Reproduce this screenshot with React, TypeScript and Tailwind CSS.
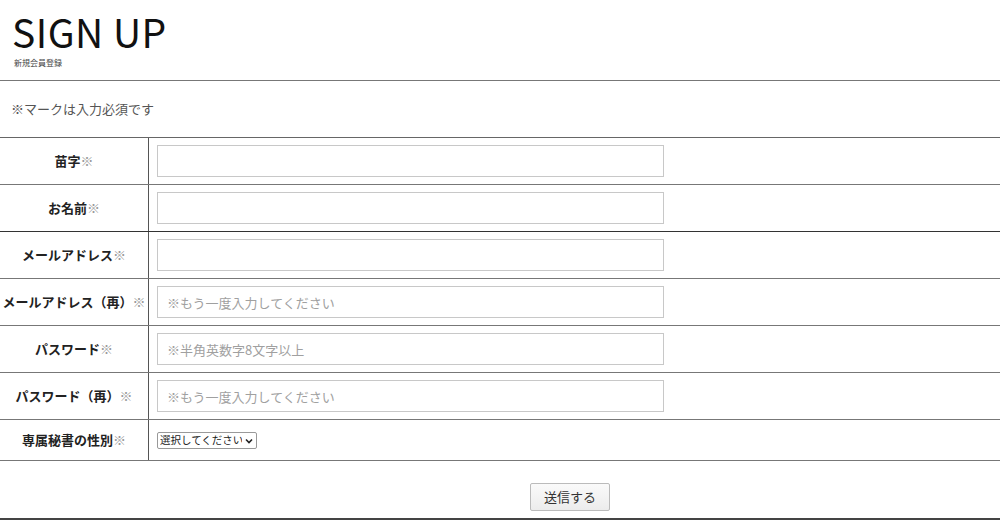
import React from 'react';

type Field = {
  label: string;
  type?: string;
  placeholder?: string;
  select?: boolean;
};

const fields: Field[] = [
  { label: '苗字' },
  { label: 'お名前' },
  { label: 'メールアドレス', type: 'email' },
  { label: 'メールアドレス（再）', type: 'email', placeholder: '※もう一度入力してください' },
  { label: 'パスワード', type: 'password', placeholder: '※半角英数字8文字以上' },
  { label: 'パスワード（再）', type: 'password', placeholder: '※もう一度入力してください' },
  { label: '専属秘書の性別', select: true },
];

const font = { fontFamily: '"Noto Sans CJK JP", "Noto Sans", sans-serif' };

const App: React.FC = () => {
  return (
    <div className="w-[1000px] h-[520px] bg-white text-[#222] overflow-hidden" style={font}>
      <header className="h-[81px] border-b border-[#777] px-3 pt-[4px]">
        <h1 className="text-[39px] leading-[54px] font-normal tracking-[0.5px] text-[#111]">SIGN UP</h1>
        <p className="text-[8px] leading-[9px] ml-[2px] text-[#444]">新規会員登録</p>
      </header>

      <p className="h-[56px] flex items-center px-[11px] text-[13px] text-[#555]">※マークは入力必須です</p>

      <div className="border-t border-[#666]">
        {fields.map((f, i) => (
          <div
            key={f.label}
            className={`grid grid-cols-[149px_1fr] border-b ${i === 1 ? 'border-[#333]' : 'border-[#777]'} ${f.select ? 'h-[41px]' : 'h-[47px]'}`}
          >
            <div className="border-r border-[#555] flex items-center justify-center text-[13px] font-bold text-[#222]">
              {f.label}
              <span className="text-[#999] font-normal">※</span>
            </div>
            <div className="flex items-center pl-[8px]">
              {f.select ? (
                <div className="relative w-[100px] h-[17px]">
                  <select className="block appearance-none w-full h-full border border-[#999] rounded-[2px] text-[10.5px] leading-none text-[#222] bg-white pl-[2px] pr-[14px] py-0">
                    <option>選択してください</option>
                    <option>男性</option>
                    <option>女性</option>
                  </select>
                  <svg
                    className="absolute right-[4px] top-[6px] pointer-events-none"
                    width="8"
                    height="6"
                    viewBox="0 0 8 6"
                  >
                    <path d="M1 1.5 L4 4.5 L7 1.5" fill="none" stroke="#222" strokeWidth="1.6" />
                  </svg>
                </div>
              ) : (
                <input
                  type={f.type ?? 'text'}
                  placeholder={f.placeholder}
                  className="w-[507px] h-[32px] border border-[#c8c8c8] px-[9px] text-[13px] placeholder:text-[#a0a0a0] outline-none"
                />
              )}
            </div>
          </div>
        ))}
      </div>

      <div className="h-[59px] border-b-2 border-[#444] flex justify-center pt-[22px]">
        <button className="w-[80px] h-[28px] border border-[#bbb] rounded-[2px] bg-gradient-to-b from-[#fafafa] to-[#ececec] text-[13px] text-[#333] ml-[140px]">
          送信する
        </button>
      </div>
    </div>
  );
};

export default App;
